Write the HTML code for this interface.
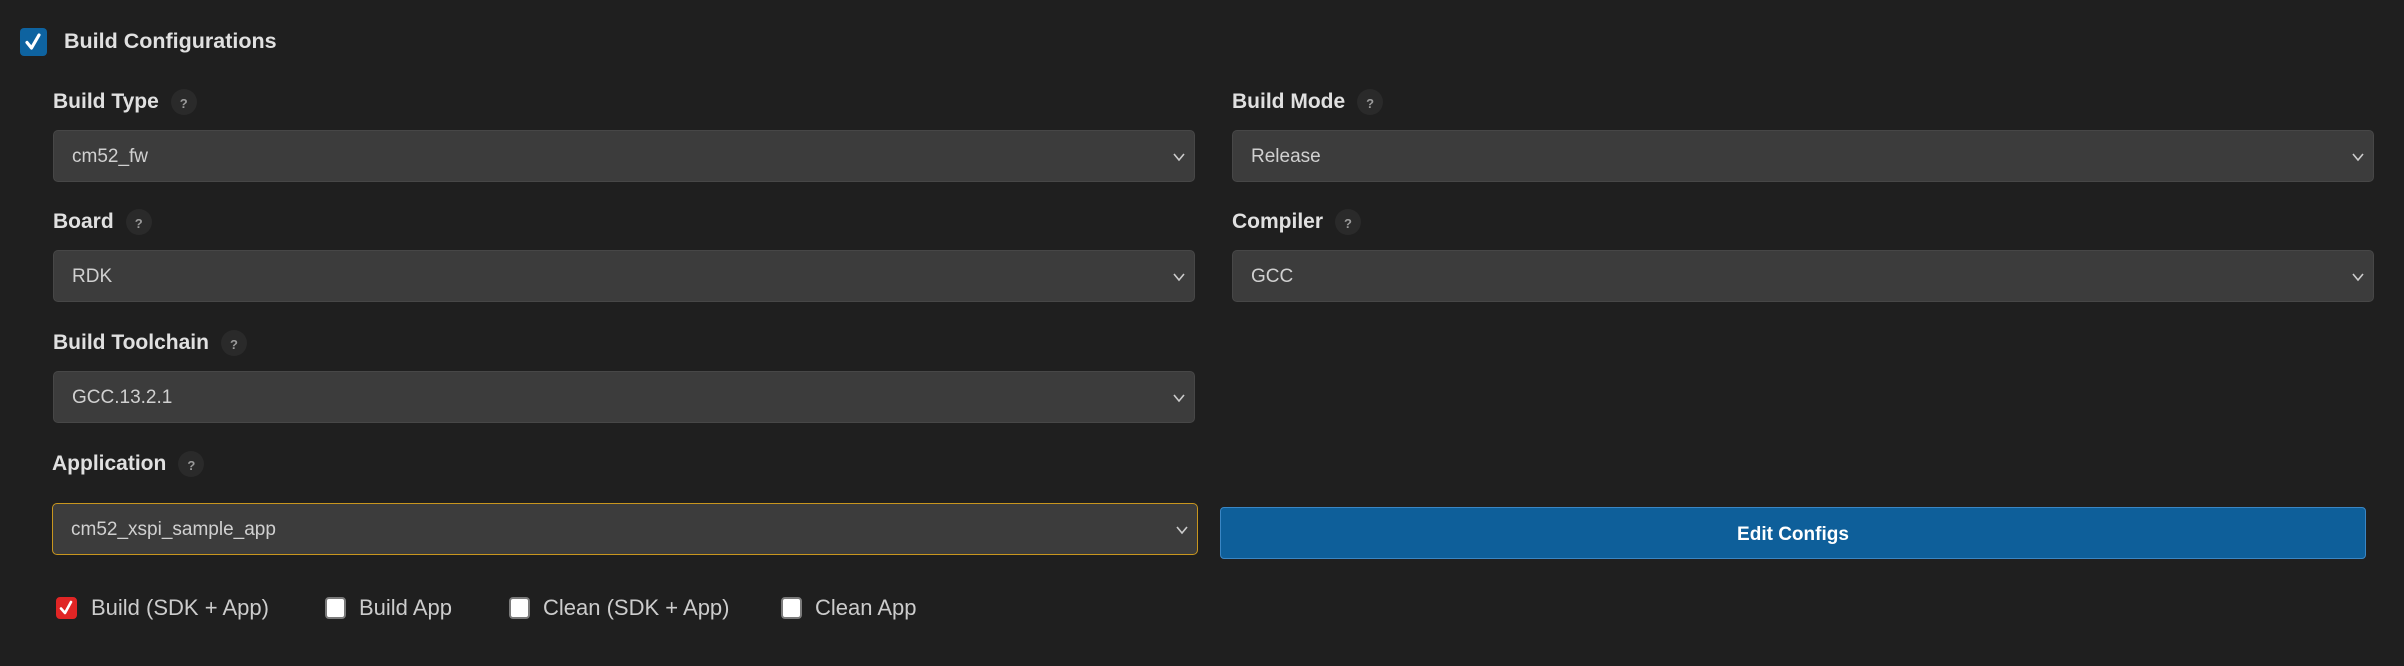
<!DOCTYPE html>
<html><head><style>
*{box-sizing:border-box;margin:0;padding:0}
body{width:2404px;height:666px;background:#1f1f1f;font-family:"Liberation Sans",sans-serif;color:#cccccc;position:relative;overflow:hidden}
.abs{position:absolute}
.lbl{position:absolute;font-weight:bold;font-size:21px;color:#e0e0e0;display:flex;align-items:center;height:30px;top:0}
.q{display:inline-block;width:26px;height:26px;border-radius:13px;background:#2a2a2a;color:#9a9a9a;font-size:13px;font-weight:bold;text-align:center;line-height:30px;margin-left:12px}
.sel{position:absolute;height:52px;background:#3c3c3c;border:1px solid #474747;border-radius:5px;font-size:19px;color:#d0d0d0;padding-left:18px;line-height:52px}
.sel svg{position:absolute;right:8px;top:21px}
.cb{position:absolute;top:597px;width:21px;height:22px;border-radius:4px;background:#fff;border:2px solid #7a7a7a}
.ct{position:absolute;top:594px;font-size:22px;color:#cccccc;line-height:28px}
</style></head><body>
<div class="abs" style="left:20px;top:28px;width:27px;height:28px;background:#0e63a0;border-radius:4px">
<svg width="27" height="28" viewBox="0 0 27 28"><path d="M7 14.5 L11.5 20 L19 7" stroke="#fff" stroke-width="3.2" fill="none" stroke-linecap="round" stroke-linejoin="round"/></svg></div>
<div class="abs" style="left:64px;top:26px;font-size:21.5px;font-weight:bold;color:#e0e0e0;line-height:30px">Build Configurations</div>

<div class="lbl" style="left:53px;top:87px">Build Type<span class="q">?</span></div>
<div class="lbl" style="left:1232px;top:87px">Build Mode<span class="q">?</span></div>
<div class="sel" style="left:53px;top:130px;width:1142px">cm52_fw<svg width="14" height="10"><path d="M2 2 L7 8 L12 2" stroke="#ccc" stroke-width="1.6" fill="none"/></svg></div>
<div class="sel" style="left:1232px;top:130px;width:1142px">Release<svg width="14" height="10"><path d="M2 2 L7 8 L12 2" stroke="#ccc" stroke-width="1.6" fill="none"/></svg></div>

<div class="lbl" style="left:53px;top:207px">Board<span class="q">?</span></div>
<div class="lbl" style="left:1232px;top:207px">Compiler<span class="q">?</span></div>
<div class="sel" style="left:53px;top:250px;width:1142px">RDK<svg width="14" height="10"><path d="M2 2 L7 8 L12 2" stroke="#ccc" stroke-width="1.6" fill="none"/></svg></div>
<div class="sel" style="left:1232px;top:250px;width:1142px">GCC<svg width="14" height="10"><path d="M2 2 L7 8 L12 2" stroke="#ccc" stroke-width="1.6" fill="none"/></svg></div>

<div class="lbl" style="left:53px;top:328px">Build Toolchain<span class="q">?</span></div>
<div class="sel" style="left:53px;top:371px;width:1142px">GCC.13.2.1<svg width="14" height="10"><path d="M2 2 L7 8 L12 2" stroke="#ccc" stroke-width="1.6" fill="none"/></svg></div>

<div class="lbl" style="left:52px;top:449px">Application<span class="q">?</span></div>
<div class="sel" style="left:52px;top:503px;width:1146px;border-color:#c8961e">cm52_xspi_sample_app<svg width="14" height="10"><path d="M2 2 L7 8 L12 2" stroke="#ccc" stroke-width="1.6" fill="none"/></svg></div>
<div class="abs" style="left:1220px;top:507px;width:1146px;height:52px;background:#0e5f9a;border:1px solid #3a86c4;border-radius:4px;color:#fff;font-weight:bold;font-size:19px;text-align:center;line-height:53px">Edit Configs</div>

<div class="cb" style="left:56px;background:#e02525;border-color:#e02525"><svg width="17" height="18" viewBox="0 0 17 18" style="position:absolute;left:0;top:0"><path d="M3 9.5 L7 14 L13 3" stroke="#fff" stroke-width="2.6" fill="none" stroke-linecap="round" stroke-linejoin="round"/></svg></div>
<div class="ct" style="left:91px">Build (SDK + App)</div>
<div class="cb" style="left:325px"></div>
<div class="ct" style="left:359px">Build App</div>
<div class="cb" style="left:509px"></div>
<div class="ct" style="left:543px">Clean (SDK + App)</div>
<div class="cb" style="left:781px"></div>
<div class="ct" style="left:815px">Clean App</div>
</body></html>
